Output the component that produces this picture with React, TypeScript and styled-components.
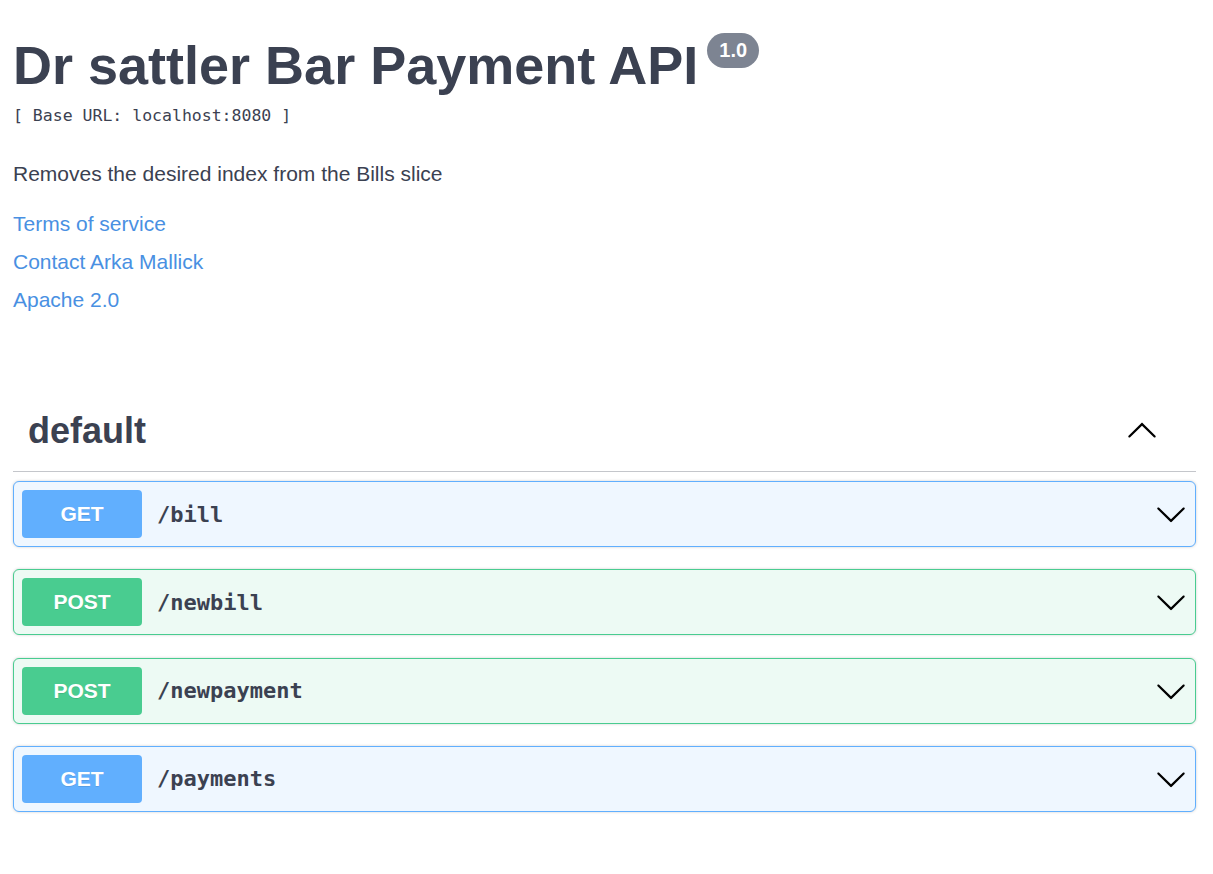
import React from "react";
import styled, { createGlobalStyle } from "styled-components";

const GlobalStyle = createGlobalStyle`
  html, body { margin: 0; padding: 0; background: #ffffff; }
  body { font-family: "Liberation Sans", Arial, sans-serif; color: #3b4151; }
  * { box-sizing: border-box; }
`;

const Wrapper = styled.div`
  padding: 33px 17px 40px 13px;
`;

const Info = styled.div`
  display: flex;
  flex-direction: column;
`;

const TitleRow = styled.div`
  display: flex;
  align-items: flex-start;
`;

const Title = styled.h2`
  margin: 0;
  font-size: 54px;
  line-height: 65px;
  font-weight: 700;
  color: #3b4151;
  font-family: "Liberation Sans", Arial, sans-serif;
`;

const Version = styled.span`
  margin-left: 9px;
  height: 35px;
  padding: 0 12px;
  border-radius: 40px;
  background: #7d8492;
  color: #ffffff;
  font-size: 20px;
  font-weight: 700;
  line-height: 35px;
  font-family: "Liberation Sans", Arial, sans-serif;
`;

const BaseUrl = styled.pre`
  margin: 8px 0 0 0;
  font-family: "DejaVu Sans Mono", monospace;
  font-size: 16.5px;
  line-height: 20px;
  color: #3b4151;
`;

const Description = styled.p`
  margin: 33px 0 0 0;
  font-size: 21px;
  line-height: 30px;
  color: #3b4151;
`;

const Links = styled.div`
  display: flex;
  flex-direction: column;
  gap: 8px;
  margin-top: 20px;
`;

const InfoLink = styled.a`
  font-size: 21px;
  line-height: 30px;
  color: #4990e2;
  text-decoration: none;
  align-self: flex-start;
`;

const TagSection = styled.section`
  margin-top: 79px;
  display: flex;
  flex-direction: column;
`;

const TagHeader = styled.h4`
  margin: 0;
  display: flex;
  align-items: center;
  justify-content: space-between;
  padding: 15px 38px 19px 15px;
  border-bottom: 1px solid #c4c6cb;
`;

const TagName = styled.span`
  font-size: 36px;
  line-height: 43px;
  font-weight: 700;
  color: #3b4151;
`;

const ArrowIcon = styled.svg<{ $up?: boolean }>`
  width: 32px;
  height: 32px;
  flex: none;
  fill: #000000;
  transform: ${(p) => (p.$up ? "rotate(180deg)" : "none")};
`;

const OpList = styled.div`
  display: flex;
  flex-direction: column;
  gap: 22.33px;
  margin-top: 9px;
`;

const palette = {
  get: { main: "#61affe", bg: "#eff7ff" },
  post: { main: "#49cc90", bg: "#edfaf4" },
};

type Method = keyof typeof palette;

const OpBlock = styled.div<{ $m: Method }>`
  display: flex;
  align-items: center;
  height: 66px;
  padding: 0 8px;
  border: 1px solid ${(p) => palette[p.$m].main};
  background: ${(p) => palette[p.$m].bg};
  border-radius: 6px;
  box-shadow: 0 0 3px rgba(0, 0, 0, 0.19);
`;

const MethodBadge = styled.span<{ $m: Method }>`
  width: 120px;
  height: 48px;
  flex: none;
  display: flex;
  align-items: center;
  justify-content: center;
  background: ${(p) => palette[p.$m].main};
  border-radius: 4px;
  color: #ffffff;
  font-size: 21px;
  font-weight: 700;
  text-shadow: 0 1px 0 rgba(0, 0, 0, 0.1);
`;

const PathText = styled.span`
  flex: 1;
  padding-left: 15px;
  font-family: "DejaVu Sans Mono", monospace;
  font-weight: 700;
  font-size: 22px;
  color: #3b4151;
`;

const Arrow = ({ up }: { up?: boolean }) => (
  <ArrowIcon $up={up} viewBox="0 0 20 20" aria-hidden="true">
    <path d="M17.418 6.109c.272-.268.709-.268.979 0s.271.701 0 .969l-7.908 7.83c-.27.268-.707.268-.979 0l-7.908-7.83c-.27-.268-.27-.701 0-.969.271-.268.709-.268.979 0L10 13.25l7.418-7.141z" />
  </ArrowIcon>
);

const ops: { m: Method; path: string }[] = [
  { m: "get", path: "/bill" },
  { m: "post", path: "/newbill" },
  { m: "post", path: "/newpayment" },
  { m: "get", path: "/payments" },
];

export default function App() {
  return (
    <>
      <GlobalStyle />
      <Wrapper>
        <Info>
          <TitleRow>
            <Title>Dr sattler Bar Payment API</Title>
            <Version>1.0</Version>
          </TitleRow>
          <BaseUrl>[ Base URL: localhost:8080 ]</BaseUrl>
          <Description>Removes the desired index from the Bills slice</Description>
          <Links>
            <InfoLink href="#">Terms of service</InfoLink>
            <InfoLink href="#">Contact Arka Mallick</InfoLink>
            <InfoLink href="#">Apache 2.0</InfoLink>
          </Links>
        </Info>
        <TagSection>
          <TagHeader>
            <TagName>default</TagName>
            <Arrow up />
          </TagHeader>
          <OpList>
            {ops.map((o) => (
              <OpBlock key={o.path} $m={o.m}>
                <MethodBadge $m={o.m}>{o.m.toUpperCase()}</MethodBadge>
                <PathText>{o.path}</PathText>
                <Arrow />
              </OpBlock>
            ))}
          </OpList>
        </TagSection>
      </Wrapper>
    </>
  );
}
